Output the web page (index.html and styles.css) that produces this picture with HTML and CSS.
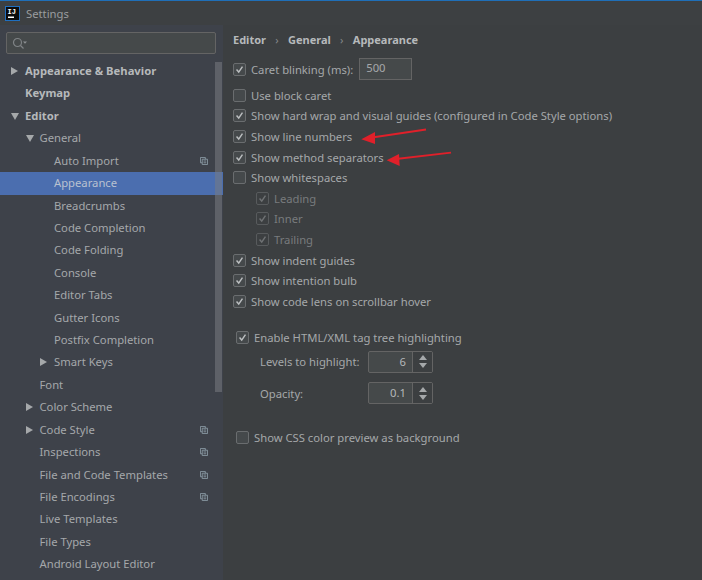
FILE: index.html
```html
<!DOCTYPE html>
<html lang="en">
<head>
<meta charset="utf-8">
<title>Settings</title>
<link rel="stylesheet" href="styles.css">
</head>
<body>
<svg width="0" height="0" class="defs">
  <defs>
    <symbol id="copy" viewBox="0 0 9 9">
      <path d="M2.5 6.500H.5V.5h5.500v2" fill="none" stroke="currentColor"/>
      <path d="M2.5 2.500h6v6h-6zM4 4.500h3M4 6.500h3" fill="none" stroke="currentColor"/>
    </symbol>
    <symbol id="tick" viewBox="0 0 13 13">
      <path d="M3 6.500l2.600 3L10 3" fill="none" stroke="currentColor" stroke-width="1.700"/>
    </symbol>
  </defs>
</svg>
<div class="window">
  <header class="titlebar">
    <svg class="logo" width="15" height="15" viewBox="0 0 15 15">
      <rect x=".5" y=".5" width="14" height="14" fill="#0b0b0b" stroke="#1f6fc0"/>
      <rect x="3" y="10.500" width="6" height="1.500" fill="#fff"/>
      <text x="2.500" y="8" class="logo-text">IJ</text>
    </svg>
    <span class="title">Settings</span>
  </header>
  <div class="main">
    <aside class="sidebar">
      <div class="search">
        <svg width="15" height="13" viewBox="0 0 15 13"><circle cx="5.500" cy="5.500" r="4" fill="none" stroke="#7f8386" stroke-width="1.200"/><path d="M8.500 8.500l3 3" stroke="#7f8386" stroke-width="1.200"/><path d="M11 4.500h4l-2 2.200z" fill="#8c9093"/></svg>
      </div>
      <nav class="tree">
        <div class="row l0 bold"><i class="arrow right"></i>Appearance &amp; Behavior</div>
        <div class="row l0 bold">Keymap</div>
        <div class="row l0 bold"><i class="arrow down"></i>Editor</div>
        <div class="row l1"><i class="arrow down"></i>General</div>
        <div class="row l2">Auto Import<svg class="copy"><use href="#copy"/></svg></div>
        <div class="row l2 selected">Appearance</div>
        <div class="row l2">Breadcrumbs</div>
        <div class="row l2">Code Completion</div>
        <div class="row l2">Code Folding</div>
        <div class="row l2">Console</div>
        <div class="row l2">Editor Tabs</div>
        <div class="row l2">Gutter Icons</div>
        <div class="row l2">Postfix Completion</div>
        <div class="row l2"><i class="arrow right"></i>Smart Keys</div>
        <div class="row l1">Font</div>
        <div class="row l1"><i class="arrow right"></i>Color Scheme</div>
        <div class="row l1"><i class="arrow right"></i>Code Style<svg class="copy"><use href="#copy"/></svg></div>
        <div class="row l1">Inspections<svg class="copy"><use href="#copy"/></svg></div>
        <div class="row l1">File and Code Templates<svg class="copy"><use href="#copy"/></svg></div>
        <div class="row l1">File Encodings<svg class="copy"><use href="#copy"/></svg></div>
        <div class="row l1">Live Templates</div>
        <div class="row l1">File Types</div>
        <div class="row l1">Android Layout Editor</div>
      </nav>
      <div class="scrollbar"></div>
    </aside>
    <section class="content">
      <div class="crumbs"><span>Editor</span><em>›</em><span>General</span><em>›</em><span>Appearance</span></div>
      <div class="opt caret"><span class="box on"><svg><use href="#tick"/></svg></span>Caret blinking (ms):<span class="field">500</span></div>
      <div class="opt block"><span class="box"></span>Use block caret</div>
      <div class="opt"><span class="box on"><svg><use href="#tick"/></svg></span>Show hard wrap and visual guides (configured in Code Style options)</div>
      <div class="opt"><span class="box on"><svg><use href="#tick"/></svg></span>Show line numbers</div>
      <div class="opt"><span class="box on"><svg><use href="#tick"/></svg></span>Show method separators</div>
      <div class="opt"><span class="box"></span>Show whitespaces</div>
      <div class="opt sub off"><span class="box on"><svg><use href="#tick"/></svg></span>Leading</div>
      <div class="opt sub off"><span class="box on"><svg><use href="#tick"/></svg></span>Inner</div>
      <div class="opt sub off"><span class="box on"><svg><use href="#tick"/></svg></span>Trailing</div>
      <div class="opt"><span class="box on"><svg><use href="#tick"/></svg></span>Show indent guides</div>
      <div class="opt"><span class="box on"><svg><use href="#tick"/></svg></span>Show intention bulb</div>
      <div class="opt"><span class="box on"><svg><use href="#tick"/></svg></span>Show code lens on scrollbar hover</div>
      <div class="opt group"><span class="box on"><svg><use href="#tick"/></svg></span>Enable HTML/XML tag tree highlighting</div>
      <div class="spin-row first"><label>Levels to highlight:</label><div class="spinner"><span class="value">6</span><span class="steps"><i class="up"></i><i class="dn"></i></span></div></div>
      <div class="spin-row"><label>Opacity:</label><div class="spinner"><span class="value">0.1</span><span class="steps"><i class="up"></i><i class="dn"></i></span></div></div>
      <div class="opt group css"><span class="box"></span>Show CSS color preview as background</div>
    </section>
  </div>
  <svg class="annot" width="702" height="580" viewBox="0 0 702 580">
    <path d="M426 129.500L372 137.500" stroke="#e0202a" stroke-width="1.800"/>
    <path d="M361.300 139.300L375 132L375 144z" fill="#e0202a"/>
    <path d="M451 152.700L396 159" stroke="#e0202a" stroke-width="1.800"/>
    <path d="M386.700 160.300L399 154L399.700 166z" fill="#e0202a"/>
  </svg>
</div>
</body>
</html>
```
FILE: styles.css
```css
* { box-sizing: border-box; }
html, body { margin: 0; padding: 0; }
body {
  width: 702px;
  height: 580px;
  overflow: hidden;
  background: #3c3f41;
  font-family: "Noto Sans", "Open Sans", sans-serif;
  font-size: 11.250px;
  color: #b4b7b9;
}
.defs { position: absolute; }
.window {
  position: relative;
  width: 702px;
  height: 580px;
  border-top: 1px solid #1f6fb8;
  display: flex;
  flex-direction: column;
}
.titlebar {
  height: 24px;
  flex: none;
  display: flex;
  align-items: center;
  padding-left: 5px;
  background: #3d4042;
}
.logo { flex: none; margin-top: 1px; }
.logo-text { font: 700 7px "Liberation Mono", monospace; fill: #fff; }
.title { margin-left: 6px; color: #9a9d9f; }
.main { flex: 1; display: flex; min-height: 0; }
.sidebar {
  position: relative;
  width: 223px;
  flex: none;
  background: #3e424a;
  padding-top: 7px;
  overflow: hidden;
}
.search {
  height: 22px;
  margin: 0 7px 0 6px;
  background: #45494a;
  border: 1px solid #646464;
  border-radius: 2px;
  display: flex;
  align-items: center;
  padding-left: 5px;
}
.tree { margin-top: 6px; }
.row {
  position: relative;
  height: 22.430px;
  line-height: 22.430px;
  white-space: nowrap;
  color: #a5a8aa;
}
.bold { font-weight: 700; color: #b6b9bb; }
.l0 { padding-left: 25px; }
.l1 { padding-left: 39.500px; }
.l2 { padding-left: 54px; }
.selected { background: #4b6eaf; color: #b9c1cf; }
.arrow { position: absolute; top: 7px; }
.l0 .arrow { left: 11px; }
.l1 .arrow { left: 26px; }
.l2 .arrow { left: 40px; }
.arrow.right {
  width: 0; height: 0;
  border-left: 7px solid #a5a8aa;
  border-top: 4px solid transparent;
  border-bottom: 4px solid transparent;
}
.arrow.down {
  width: 0; height: 0;
  top: 8px;
  border-top: 7px solid #a5a8aa;
  border-left: 4px solid transparent;
  border-right: 4px solid transparent;
}
.copy {
  position: absolute;
  left: 200px;
  top: 7px;
  width: 8px;
  height: 8px;
  color: #8b9ba5;
}
.scrollbar {
  position: absolute;
  left: 215px;
  top: 37px;
  width: 7px;
  height: 330px;
  background: rgba(120, 124, 130, 0.55);
}
.content {
  flex: 1;
  padding: 0 0 0 10px;
  background: #3c3f41;
  min-width: 0;
}
.crumbs {
  height: 30px;
  padding-top: 7px;
  line-height: 16px;
  font-size: 11px;
  font-weight: 700;
  color: #b6b9bb;
  display: flex;
}
.crumbs em {
  font-style: normal;
  font-weight: 400;
  color: #85888a;
  width: 22px;
  text-align: center;
}
.opt {
  height: 20.600px;
  display: flex;
  align-items: center;
  white-space: nowrap;
  color: #a5a8aa;
}
.box {
  flex: none;
  width: 13px;
  height: 13px;
  margin-right: 5px;
  border: 1px solid #6a6d6f;
  border-radius: 2px;
  background: #45494b;
  color: #bcbfc1;
  display: flex;
}
.box svg { width: 11px; height: 11px; }
.caret { height: 24px; margin-top: 2px; margin-bottom: 4px; }
.field {
  width: 53px;
  height: 22px;
  margin-left: 6px;
  padding-left: 6px;
  line-height: 18px;
  border: 1px solid #646464;
  background: #45494a;
}
.sub { padding-left: 23px; }
.off { color: #787b7d; }
.off .box { background: transparent; border-color: #585b5d; color: #6f7274; }
.group { padding-left: 3px; margin-top: 16px; }
.spin-row {
  height: 31.500px;
  display: flex;
  align-items: center;
  padding-left: 27px;
  color: #a5a8aa;
}
.spin-row.first { margin-top: -2px; }
.spin-row label { width: 108px; }
.spinner {
  width: 65px;
  height: 22px;
  display: flex;
  border: 1px solid #646464;
  border-radius: 2px;
  background: #45494a;
}
.value { flex: 1; text-align: right; padding-right: 6px; line-height: 19px; color: #b4b7b9; }
.steps {
  width: 20px;
  border-left: 1px solid #646464;
  background: #3c3f41;
  display: flex;
  flex-direction: column;
  align-items: center;
  justify-content: center;
  gap: 3px;
}
.up, .dn { width: 0; height: 0; border-left: 4px solid transparent; border-right: 4px solid transparent; }
.up { border-bottom: 5px solid #a5a8aa; }
.dn { border-top: 5px solid #a5a8aa; }
.css { margin-top: 18px; }
.annot { position: absolute; left: 0; top: -1px; pointer-events: none; }
```
